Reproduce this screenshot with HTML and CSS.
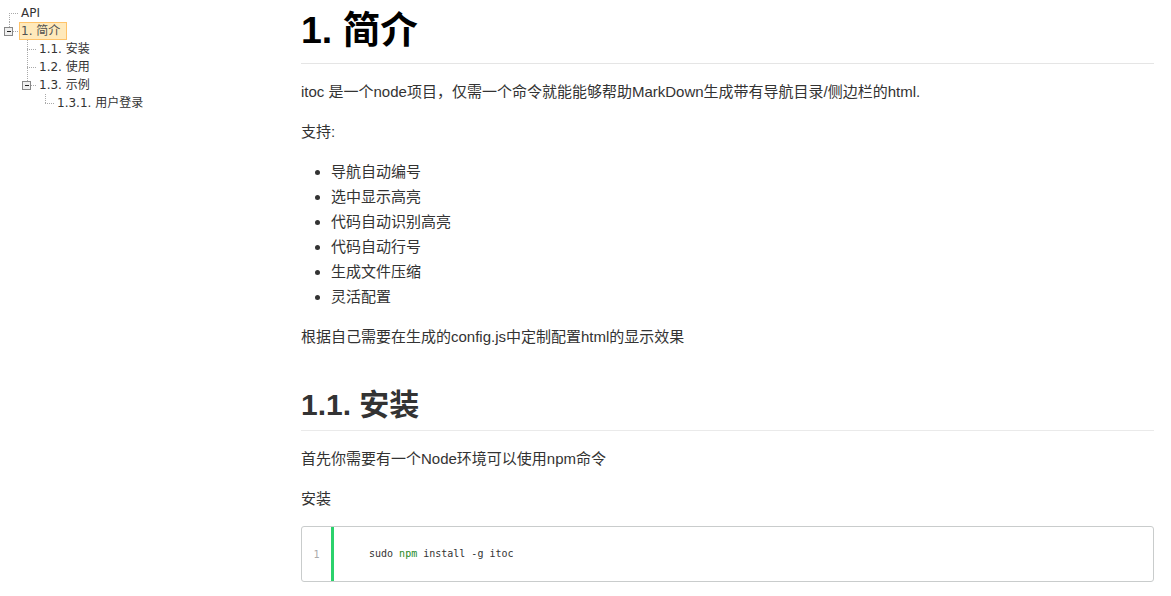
FILE: index.html
```html
<!DOCTYPE html>
<html lang="zh-CN">
<head>
<meta charset="utf-8">
<title>itoc</title>
<link rel="stylesheet" href="styles.css">
</head>
<body>
<div class="layout">
  <nav class="sidebar">
    <ul class="tree">
      <li>
        <div class="node">
          <svg class="switch" width="18" height="18" viewBox="0 0 18 18"><path class="dot" d="M9.5 9v9M9 9.5h10"/></svg>
          <span class="label">API</span>
        </div>
      </li>
      <li>
        <div class="node">
          <svg class="switch" width="18" height="18" viewBox="0 0 18 18"><path class="dot" d="M9.5 0v5M13 9.5h5"/><rect class="box" x="4.5" y="5.5" width="8" height="8"/><path class="minus" d="M6.5 9.5h4"/></svg>
          <span class="label current">1. 简介</span>
        </div>
        <ul>
          <li>
            <div class="node">
              <svg class="switch" width="18" height="18" viewBox="0 0 18 18"><path class="dot" d="M9.5 0v18M9 9.5h9"/></svg>
              <span class="label">1.1. 安装</span>
            </div>
          </li>
          <li>
            <div class="node">
              <svg class="switch" width="18" height="18" viewBox="0 0 18 18"><path class="dot" d="M9.5 0v18M9 9.5h9"/></svg>
              <span class="label">1.2. 使用</span>
            </div>
          </li>
          <li>
            <div class="node">
              <svg class="switch" width="18" height="18" viewBox="0 0 18 18"><path class="dot" d="M9.5 0v5M13 9.5h5"/><rect class="box" x="4.5" y="5.5" width="8" height="8"/><path class="minus" d="M6.5 9.5h4"/></svg>
              <span class="label">1.3. 示例</span>
            </div>
            <ul>
              <li>
                <div class="node">
                  <svg class="switch" width="18" height="18" viewBox="0 0 18 18"><path class="dot" d="M9.5 0v10M9 9.5h9"/></svg>
                  <span class="label">1.3.1. 用户登录</span>
                </div>
              </li>
            </ul>
          </li>
        </ul>
      </li>
    </ul>
  </nav>
  <main class="content">
    <h1>1. 简介</h1>
    <p>itoc 是一个node项目，仅需一个命令就能能够帮助MarkDown生成带有导航目录/侧边栏的html.</p>
    <p>支持:</p>
    <ul class="list">
      <li>导航自动编号</li>
      <li>选中显示高亮</li>
      <li>代码自动识别高亮</li>
      <li>代码自动行号</li>
      <li>生成文件压缩</li>
      <li>灵活配置</li>
    </ul>
    <p>根据自己需要在生成的config.js中定制配置html的显示效果</p>
    <h2>1.1. 安装</h2>
    <p>首先你需要有一个Node环境可以使用npm命令</p>
    <p>安装</p>
    <div class="code">
      <div class="gutter">1</div>
      <div class="bar"></div>
      <pre class="code-text">sudo <span class="kw">npm</span> install -g itoc</pre>
    </div>
  </main>
</div>
</body>
</html>
```

FILE: styles.css
```css
html, body {
  margin: 0;
  padding: 0;
  background: #fff;
}

body {
  font-family: "Liberation Sans", "Noto Sans CJK SC", sans-serif;
  color: #333;
}

.layout {
  display: flex;
  align-items: flex-start;
}

.sidebar {
  flex: 0 0 301px;
  padding-top: 4px;
  font-family: "DejaVu Sans", "Noto Sans CJK SC", sans-serif;
  font-size: 12px;
  color: #333;
}

.tree,
.tree ul {
  list-style: none;
  margin: 0;
  padding: 0;
}

.tree ul {
  padding-left: 18px;
}

.node {
  display: flex;
  align-items: center;
  height: 18px;
}

.switch {
  flex: 0 0 18px;
  display: block;
  shape-rendering: crispEdges;
}

.dot {
  fill: none;
  stroke: #a9a9a9;
  stroke-width: 1;
  stroke-dasharray: 1 1;
}

.box {
  fill: #efefef;
  stroke: #888;
  stroke-width: 1;
}

.minus {
  stroke: #222;
  stroke-width: 1;
}

.label {
  display: inline-block;
  height: 16px;
  line-height: 16px;
  padding: 0 6px 0 1px;
  margin-left: 1px;
  border: 1px solid transparent;
  white-space: nowrap;
}

.label.current {
  background: #ffe6b0;
  border-color: #ffb951;
  opacity: 0.85;
}

.content {
  flex: 0 0 853px;
  width: 853px;
  padding-top: 8px;
  font-size: 15px;
  line-height: 25px;
}

.content h1 {
  margin: 0;
  font-size: 37.5px;
  line-height: 45px;
  font-weight: bold;
  color: #000;
  padding-bottom: 10px;
  border-bottom: 1px solid #e5e5e5;
}

.content h2 {
  margin: 38px 0 15px;
  font-size: 30px;
  line-height: 36px;
  font-weight: bold;
  color: #333;
  padding-bottom: 7px;
  border-bottom: 1px solid #eaeaea;
}

.content p {
  margin: 15px 0;
}

.list {
  margin: 15px 0;
  padding-left: 30px;
}

.code {
  display: flex;
  align-items: stretch;
  height: 54px;
  margin: 15px 0;
  border: 1px solid #c9cccc;
  border-radius: 3px;
  background: #fff;
}

.gutter {
  flex: 0 0 29px;
  display: flex;
  align-items: center;
  justify-content: center;
  font-family: "DejaVu Sans Mono", monospace;
  font-size: 10px;
  color: #aaa;
}

.bar {
  flex: 0 0 3px;
  background: #2bd26c;
}

.code-text {
  margin: 0;
  padding-left: 35px;
  display: flex;
  align-items: center;
  font-family: "DejaVu Sans Mono", monospace;
  font-size: 10px;
  line-height: 14px;
  color: #333;
}

.kw {
  color: #1e8a1e;
}
```
